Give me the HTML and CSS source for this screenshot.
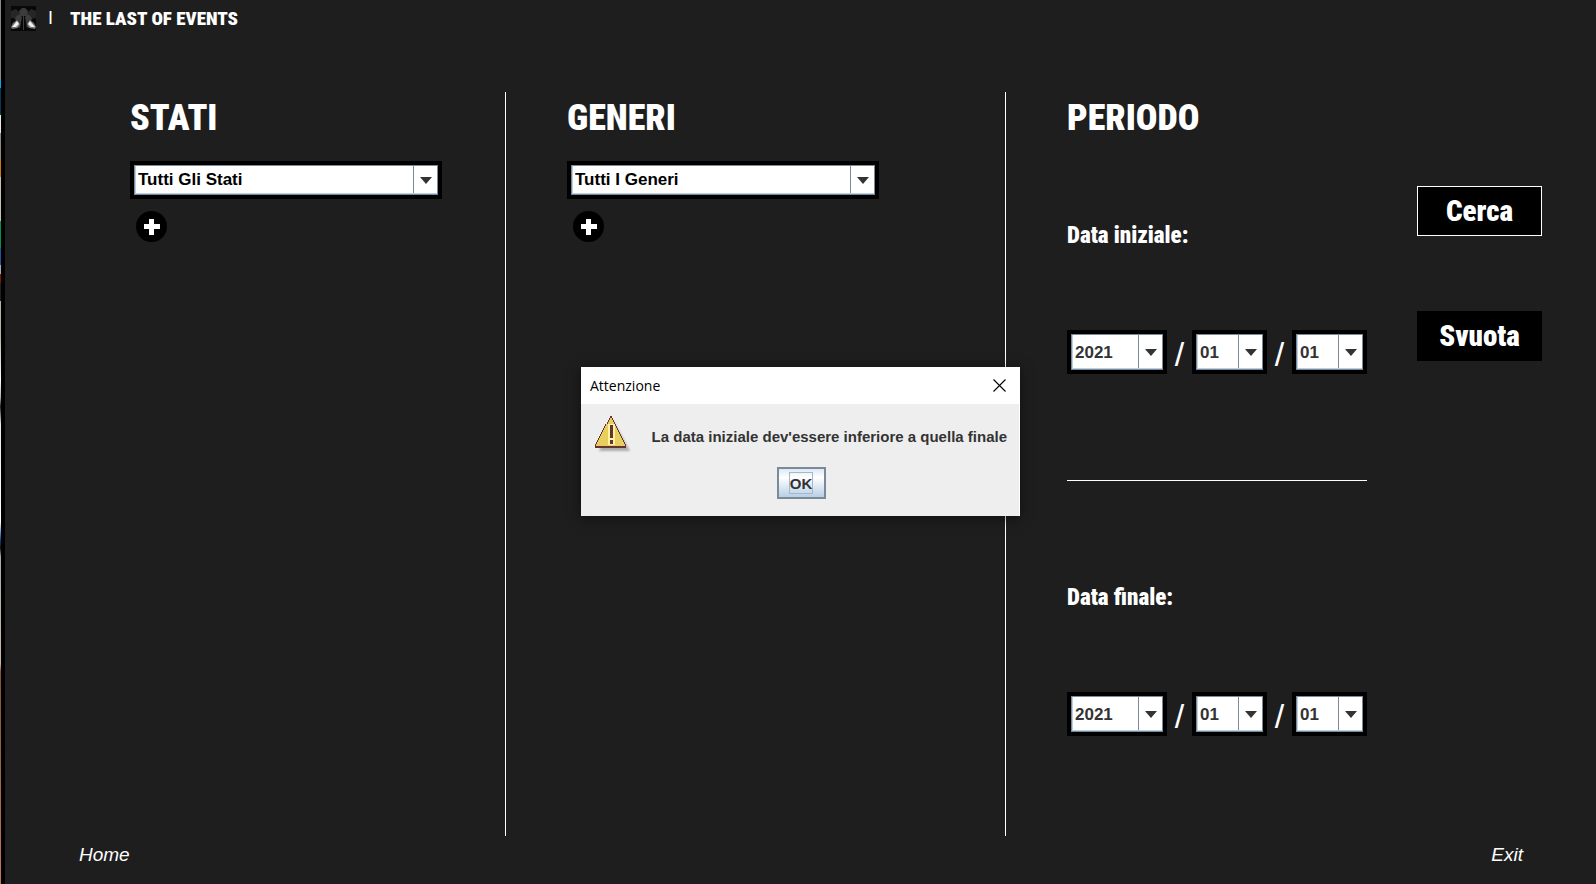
FILE: index.html
```html
<!DOCTYPE html>
<html lang="it">
<head>
<meta charset="utf-8">
<title>The Last of Events</title>
<link rel="stylesheet" href="styles.css">
</head>
<body>
<div class="desktop-edge"></div>
<div class="window">
  <header class="topbar">
    <svg class="logo" viewBox="0 0 25 25" aria-hidden="true">
      <defs><filter id="soft"><feGaussianBlur stdDeviation="0.7"/></filter></defs>
      <rect width="25" height="25" fill="#080808"/>
      <g filter="url(#soft)">
        <path d="M0 5 5 3 9 7 6 13 0 12ZM25 5 20 3 16 7 19 13 25 12Z" fill="#262626"/>
        <path d="M8 5 11 2 14 2 17 5 16 10 9 10Z" fill="#3a3a3a"/>
        <path d="M4 12 8 8 11 11 9 22 6 20ZM21 12 17 8 14 11 16 22 19 20Z" fill="#3c3c3c"/>
        <path d="M0 21 2 17 6 14 9 18 7 22 1 23ZM25 21 23 17 19 14 16 18 18 22 24 23Z" fill="#777"/>
        <path d="M1 21 6 15 8 18 5 21ZM24 21 19 15 17 18 20 21Z" fill="#f0f0f0"/>
        <path d="M12 4h1v20h-1z" fill="#3c3c3c"/>
      </g>
    </svg>
    <span class="divider">I</span>
    <span class="brand">THE LAST OF EVENTS</span>
  </header>

  <main class="columns">
    <section class="column">
      <h1 class="heading" id="stati">STATI</h1>
      <div class="combo combo-wide">
        <select class="combo-field" aria-labelledby="stati"><option>Tutti Gli Stati</option></select>
        <svg class="combo-arrow" viewBox="0 0 12 7" aria-hidden="true"><path d="M0 0h12L6 7z"/></svg>
      </div>
      <button class="add" type="button" aria-label="Aggiungi stato">
        <svg viewBox="0 0 31 31"><circle cx="15.5" cy="15.5" r="15.5"/><path d="M13 8h5v5h6v5h-6v6h-5v-6H8v-5h5z" fill="#fff"/></svg>
      </button>
    </section>

    <section class="column">
      <h1 class="heading" id="generi">GENERI</h1>
      <div class="combo combo-wide">
        <select class="combo-field" aria-labelledby="generi"><option>Tutti I Generi</option></select>
        <svg class="combo-arrow" viewBox="0 0 12 7" aria-hidden="true"><path d="M0 0h12L6 7z"/></svg>
      </div>
      <button class="add" type="button" aria-label="Aggiungi genere">
        <svg viewBox="0 0 31 31"><circle cx="15.5" cy="15.5" r="15.5"/><path d="M13 8h5v5h6v5h-6v6h-5v-6H8v-5h5z" fill="#fff"/></svg>
      </button>
    </section>

    <section class="column column-period">
      <div class="period">
        <h1 class="heading">PERIODO</h1>
        <fieldset class="date">
          <legend class="date-label">Data iniziale:</legend>
          <div class="date-row">
            <div class="combo"><select class="combo-field" aria-label="Anno iniziale"><option>2021</option></select><svg class="combo-arrow" viewBox="0 0 12 7" aria-hidden="true"><path d="M0 0h12L6 7z"/></svg></div>
            <span class="slash">/</span>
            <div class="combo"><select class="combo-field" aria-label="Mese iniziale"><option>01</option></select><svg class="combo-arrow" viewBox="0 0 12 7" aria-hidden="true"><path d="M0 0h12L6 7z"/></svg></div>
            <span class="slash">/</span>
            <div class="combo"><select class="combo-field" aria-label="Giorno iniziale"><option>01</option></select><svg class="combo-arrow" viewBox="0 0 12 7" aria-hidden="true"><path d="M0 0h12L6 7z"/></svg></div>
          </div>
        </fieldset>
        <hr class="rule">
        <fieldset class="date">
          <legend class="date-label">Data finale:</legend>
          <div class="date-row">
            <div class="combo"><select class="combo-field" aria-label="Anno finale"><option>2021</option></select><svg class="combo-arrow" viewBox="0 0 12 7" aria-hidden="true"><path d="M0 0h12L6 7z"/></svg></div>
            <span class="slash">/</span>
            <div class="combo"><select class="combo-field" aria-label="Mese finale"><option>01</option></select><svg class="combo-arrow" viewBox="0 0 12 7" aria-hidden="true"><path d="M0 0h12L6 7z"/></svg></div>
            <span class="slash">/</span>
            <div class="combo"><select class="combo-field" aria-label="Giorno finale"><option>01</option></select><svg class="combo-arrow" viewBox="0 0 12 7" aria-hidden="true"><path d="M0 0h12L6 7z"/></svg></div>
          </div>
        </fieldset>
      </div>
      <div class="actions">
        <button class="action action-main" type="button">Cerca</button>
        <button class="action" type="button">Svuota</button>
      </div>
    </section>
  </main>

  <footer class="footer">
    <a class="footer-link" href="#home">Home</a>
    <a class="footer-link" href="#exit">Exit</a>
  </footer>

  <dialog class="dialog" open aria-labelledby="dialog-title">
    <div class="dialog-bar">
      <span id="dialog-title">Attenzione</span>
      <button class="dialog-close" type="button" aria-label="Chiudi">
        <svg viewBox="0 0 13 13"><path d="M.5.5l12 12M12.5.5l-12 12" fill="none" stroke="#000" stroke-width="1.1"/></svg>
      </button>
    </div>
    <div class="dialog-body">
      <div class="dialog-message">
        <svg class="warning" viewBox="0 0 36 38" aria-hidden="true">
          <defs><filter id="shade" x="-20%" y="-20%" width="140%" height="140%"><feGaussianBlur stdDeviation="1.3"/></filter></defs>
          <path d="M18 4 35 35H4z" fill="#777" opacity=".55" filter="url(#shade)"/>
          <g shape-rendering="crispEdges">
            <path d="M15 0h2v2h1v2h1v2h1v2h1v2h1v2h1v2h1v2h1v2h1v2h1v2h1v2h1v2h1v2h1v4H0v-4h1v-2h1v-2h1v-2h1v-2h1v-2h1v-2h1v-2h1v-2h1v-2h1v-2h1V8h1V6h1V4h1V2h1z" fill="#633"/>
            <path d="M15 2h2v2h1v2h1v2h1v2h1v2h1v2h1v2h1v2h1v2h1v2h1v2h1v2h1v2h1v2H1v-2h1v-2h1v-2h1v-2h1v-2h1v-2h1v-2h1v-2h1v-2h1v-2h1v-2h1V8h1V6h1V4h1z" fill="#e6cf5c"/>
            <path d="M13 8h7v21h-7z" fill="#fff3a0"/>
            <path d="M15 9h3v13h-3zM15 24h3v4h-3z" fill="#633"/>
          </g>
        </svg>
        <p class="dialog-text">La data iniziale dev'essere inferiore a quella finale</p>
      </div>
      <button class="dialog-ok" type="button"><span class="dialog-focus">OK</span></button>
    </div>
  </dialog>
</div>
</body>
</html>
```

FILE: styles.css
```css
* {
  box-sizing: border-box;
}

body {
  margin: 0;
  min-height: 100vh;
  display: flex;
  background: #1e1e1e;
  color: #fff;
  font-family: "Liberation Sans", Arial, sans-serif;
}

button,
select {
  font-family: inherit;
}

/* Sliver of the desktop beside the window */
.desktop-edge {
  width: 5px;
  border-right: 4px solid #000;
  background: linear-gradient(#8d8580 0 9%, #00a8f0 9% 10%, #003c55 10% 13%, #e8e8e8 13% 15%, #8d8580 15% 18%, #c47a10 18% 20%, #c8c0b0 20% 25%, #009050 25% 28%, #2850a0 28% 30%, #aaa 30% 31%, #801800 31% 32%, #222 32% 34%, #b8b0a0 34% 38%, #fff 43%, #aaa 45%, #222 46%, #e8e8e8 48%, #fff 59%, #0050a0 61%, #111 62%, #aaa 63%, #c8b8a0 75%, #8a5034 76%, #c07850 100%);
}

.window {
  position: relative;
  flex: 1;
  display: flex;
  flex-direction: column;
}

.topbar {
  display: flex;
  align-items: center;
  height: 36px;
  margin-bottom: 56px;
  padding-left: 6px;
}

.logo {
  width: 25px;
  height: 25px;
}

.divider {
  margin: 0 17px 0 12px;
  font-size: 18px;
}

.brand,
.heading,
.date-label,
.action {
  font-family: "Roboto Condensed", "Liberation Sans", sans-serif;
  font-weight: 900;
}

.brand {
  font-size: 19px;
}

.columns {
  flex: 1;
  display: grid;
  grid-template-columns: 501fr 500fr 590fr;
}

.column {
  padding-left: 61px;
  border-right: 1px solid #fff;
}

.column:first-child {
  padding-left: 125px;
}

.column-period {
  display: flex;
  justify-content: space-between;
  padding-right: 54px;
  border-right: 0;
}

.heading {
  margin: 0 0 17px;
  font-size: 36px;
  line-height: 52px;
}

.combo {
  display: grid;
  grid-template-columns: 1fr 24px;
  align-items: center;
  height: 44px;
  border: 4px solid #000;
}

.combo-wide {
  width: 312px;
  height: 38px;
}

.combo-field {
  grid-area: 1 / 1 / 2 / 3;
  width: 100%;
  height: 100%;
  padding: 0 24px 0 3px;
  appearance: none;
  border: 1px solid #7a8a99;
  border-radius: 0;
  background: linear-gradient(#7a8a99, #7a8a99) right 23px top / 1px 100% no-repeat #fff;
  box-shadow: inset 1px -1px #b8cfe5;
  color: #333;
  font-size: 17px;
  font-weight: 700;
}

.combo-wide .combo-field {
  padding-bottom: 2px;
  color: #000;
}

.combo-arrow {
  grid-area: 1 / 2;
  justify-self: center;
  width: 12px;
  height: 7px;
  fill: #333;
  pointer-events: none;
}

.add {
  display: block;
  width: 31px;
  height: 31px;
  margin: 12px 0 0 6px;
  padding: 0;
  border: 0;
  background: none;
}

.add svg {
  display: block;
}

.period {
  width: 300px;
}

.date {
  min-width: 0;
  margin: 74px 0 0;
  padding: 0;
  border: 0;
}

.date-label {
  margin-bottom: 76px;
  padding: 0;
  font-size: 23px;
  line-height: 36px;
}

.date-row {
  display: grid;
  grid-template-columns: 100px 25px 75px 25px 75px;
  align-items: center;
}

.slash {
  padding-top: 4px;
  text-align: center;
  font-size: 34px;
}

.rule {
  height: 1px;
  margin: 106px 0 99px;
  border: 0;
  background: #fff;
}

.rule + .date {
  margin-top: 0;
}

.actions {
  display: flex;
  flex-direction: column;
  gap: 75px;
  padding-top: 94px;
}

.action {
  width: 125px;
  height: 50px;
  padding: 0;
  border: 0;
  background: #000;
  color: #fff;
  font-size: 29px;
}

.action-main {
  border: 1px solid #fff;
}

.footer {
  display: flex;
  justify-content: space-between;
  padding: 7px 73px 17px 74px;
}

.footer-link {
  color: #fff;
  font-size: 19px;
  font-style: italic;
  line-height: 24px;
  text-decoration: none;
}

.dialog {
  position: absolute;
  inset: 0 0 2px;
  width: 439px;
  height: fit-content;
  margin: auto;
  padding: 0;
  border: 0;
  background: #eee;
  color: #333;
  box-shadow: 0 2px 12px rgba(0, 0, 0, 0.5);
}

.dialog-bar {
  display: flex;
  align-items: center;
  justify-content: space-between;
  height: 37px;
  padding: 0 14px 0 9px;
  background: #fff;
  color: #000;
  font-family: "Open Sans", sans-serif;
  font-size: 14px;
}

.dialog-close {
  display: flex;
  width: 13px;
  height: 13px;
  padding: 0;
  border: 0;
  background: none;
}

.dialog-body {
  padding: 12px 12px 17px 14px;
  border-right: 1px solid #fff;
}

.dialog-message {
  display: flex;
  align-items: center;
  justify-content: space-between;
  height: 42px;
}

.warning {
  align-self: flex-start;
  width: 36px;
  height: 38px;
}

.dialog-text {
  margin: 0;
  font-size: 15px;
  font-weight: 700;
  white-space: nowrap;
}

.dialog-ok {
  display: block;
  width: 49px;
  height: 32px;
  margin: 9px auto 0;
  padding: 0;
  border: 2px solid #7a8a99;
  background: linear-gradient(#dde8f3, #fff 30%, #b8cfe5);
  color: #333;
  font-size: 15px;
  font-weight: 700;
}

.dialog-focus {
  display: inline-block;
  padding-top: 2px;
  border: 1px solid #a3b8cc;
  line-height: 18px;
}
```
